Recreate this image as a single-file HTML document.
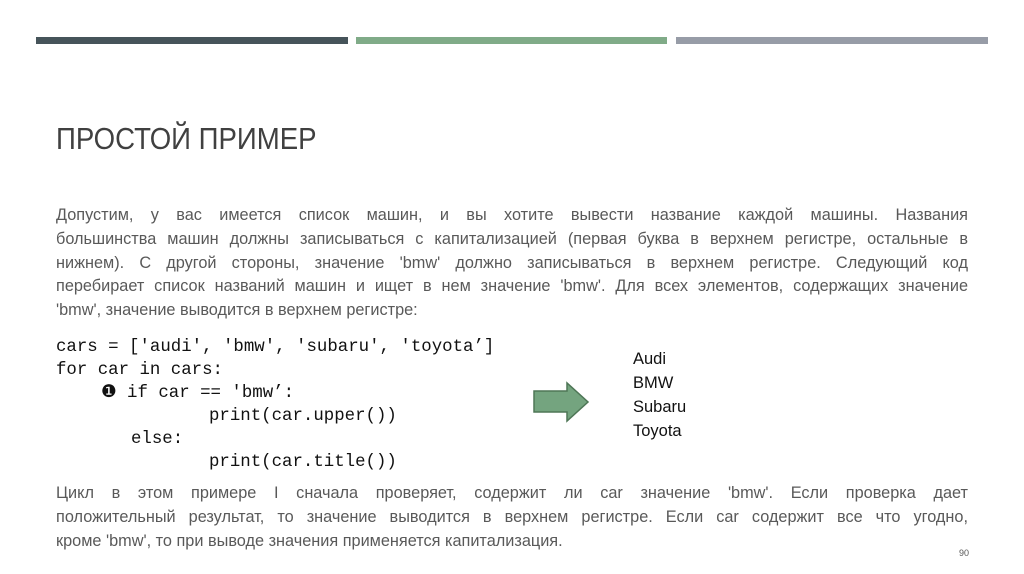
<!DOCTYPE html>
<html><head><meta charset="utf-8"><style>
body{margin:0;width:1024px;height:574px;background:#fff;position:relative;overflow:hidden;font-family:"Liberation Sans",sans-serif}
.bar{position:absolute;top:37px;height:7px}
.t{position:absolute;left:56px;top:121px;font-size:31px;color:#404040;transform:scaleX(0.89);transform-origin:left;white-space:nowrap}
.p{position:absolute;left:56px;width:912px;font-size:16.3px;color:#595959;line-height:23.8px}
.p div{text-align:justify;text-align-last:justify;overflow:visible}
.p div.l{text-align-last:left}
.c{position:absolute;font-family:"Liberation Mono",monospace;font-size:17.4px;color:#111;white-space:pre;line-height:23px}
.o{position:absolute;left:633px;font-size:16.5px;color:#111;line-height:24px}
</style></head><body>
<div class="bar" style="left:36px;width:312px;background:#46545a"></div>
<div class="bar" style="left:356px;width:311px;background:#80ab88"></div>
<div class="bar" style="left:676px;width:312px;background:#979ca7"></div>
<div class="t">ПРОСТОЙ ПРИМЕР</div>
<div class="p" style="top:204px">
<div>Допустим, у вас имеется список машин, и вы хотите вывести название каждой машины. Названия</div>
<div>большинства машин должны записываться с капитализацией (первая буква в верхнем регистре, остальные в</div>
<div>нижнем). С другой стороны, значение 'bmw' должно записываться в верхнем регистре. Следующий код</div>
<div>перебирает список названий машин и ищет в нем значение 'bmw'. Для всех элементов, содержащих значение</div>
<div class="l">'bmw', значение выводится в верхнем регистре:</div>
</div>
<div class="c" style="left:56px;top:336px">cars = ['audi', 'bmw', 'subaru', 'toyota’]
for car in cars:</div>
<div class="c" style="left:101px;top:382px">❶ if car == 'bmw’:</div>
<div class="c" style="left:209px;top:405px">print(car.upper())</div>
<div class="c" style="left:131px;top:428px">else:</div>
<div class="c" style="left:209px;top:451px">print(car.title())</div>
<svg style="position:absolute;left:530px;top:378px" width="64" height="48"><polygon points="4,13 37,13 37,5 58,24 37,43 37,34 4,34" fill="#74a47f" stroke="#4e7656" stroke-width="1.5"/></svg>
<div class="o" style="top:347px">Audi<br>BMW<br>Subaru<br>Toyota</div>
<div class="p" style="top:482px">
<div>Цикл в этом примере I сначала проверяет, содержит ли car значение 'bmw'. Если проверка дает</div>
<div>положительный результат, то значение выводится в верхнем регистре. Если car содержит все что угодно,</div>
<div class="l">кроме 'bmw', то при выводе значения применяется капитализация.</div>
</div>
<div style="position:absolute;left:959px;top:548px;font-size:9px;color:#595959">90</div>
</body></html>
